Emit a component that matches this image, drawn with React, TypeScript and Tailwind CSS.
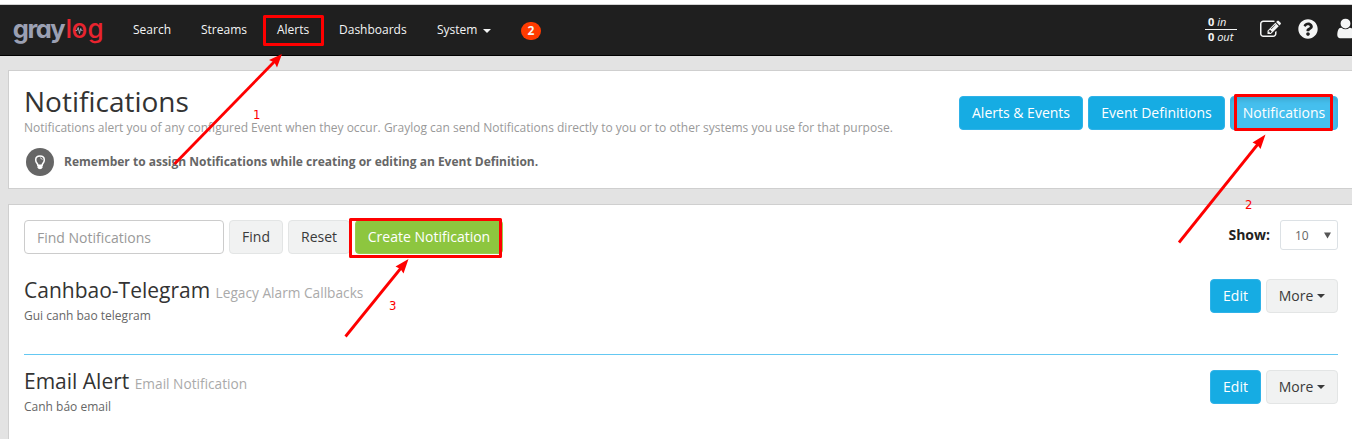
import type { ReactNode } from "react";
import { FaQuestionCircle } from "react-icons/fa";

function Caret({ className = "" }: { className?: string }) {
  return (
    <span
      className={`inline-block h-0 w-0 border-x-4 border-t-4 border-x-transparent border-t-current align-middle ${className}`}
    />
  );
}

function Logo() {
  return (
    <svg width="96" height="40" viewBox="0 0 96 40" className="block overflow-visible font-['Inter',sans-serif] [font-feature-settings:'cv11','ss01']">
      <text x="-1.3 13.5 21.7 36.300" y="28.500" fontWeight="700" fontSize="25.500" fill="#9ba0b3">
        gray
      </text>
      <text x="51.500 57.500 73.500" y="28.500" fontWeight="500" fontSize="26" fill="#e8242f">
        log
      </text>
      <polyline points="61.500,21.500 63,21.500 64.200,18.500 65.500,24.500 66.700,19.500 67.500,21.500 68.500,21.500" fill="none" stroke="#a9adbd" strokeWidth="0.9" />
    </svg>
  );
}

function EditIcon() {
  return (
    <svg className="ml-[23px] mt-[14px] shrink-0" width="21" height="21" viewBox="0 0 1792 1792" fill="currentColor">
      <path d="M888 1184l116-116-152-152-116 116v56h96v96h56zm440-720q-16-16-33 1l-350 350q-17 17-1 33t33-1l350-350q17-17 1-33zm80 594v190q0 119-84.500 203.500t-203.500 84.500h-832q-119 0-203.500-84.500t-84.500-203.500v-832q0-119 84.500-203.500t203.500-84.500h832q63 0 117 25 15 7 18 23 3 17-9 29l-49 49q-14 14-32 8-23-6-45-6h-832q-66 0-113 47t-47 113v832q0 66 47 113t113 47h832q66 0 113-47t47-113v-126q0-13 9-22l64-64q15-15 35-7t20 29zm-96-738l288 288-672 672h-288v-288zm444 132l-92 92-288-288 92-92q28-28 68-28t68 28l152 152q28 28 28 68t-28 68z" />
    </svg>
  );
}

function UserIcon() {
  return (
    <svg className="ml-[16px] mt-[12px] shrink-0" width="23" height="23" viewBox="0 0 1792 1792" fill="currentColor">
      <path d="M1536 1399q0 109-62.500 187t-150.500 78h-854q-88 0-150.500-78t-62.500-187q0-85 8.500-160.500t31.500-152 58.500-131 94-89 134.500-34.500q131 128 313 128t313-128q76 0 134.500 34.500t94 89 58.500 131 31.500 152 8.500 160.500zm-256-887q0 159-112.500 271.500t-271.500 112.500-271.500-112.500-112.500-271.500 112.500-271.500 271.500-112.500 271.500 112.500 112.500 271.500z" />
    </svg>
  );
}

function Button({ tone, className = "", children }: { tone: "blue" | "active" | "gray" | "green"; className?: string; children: ReactNode }) {
  const tones = {
    blue: "border-[#2fb2e8] bg-[#16ace3] text-white",
    active: "border-[#3ab4e6] bg-[#45bfee] text-white shadow-[inset_0_3px_5px_rgba(0,0,0,0.125)]",
    gray: "border-[#e3e5e5] bg-[#f1f2f2] text-[#3a3a3a]",
    green: "border-[#98cd4d] bg-[#8dc63f] text-white",
  };
  return (
    <button className={`flex h-[34px] shrink-0 items-center justify-center whitespace-nowrap rounded-[4px] border text-[14px] leading-5 ${tones[tone]} ${className}`}>
      {children}
    </button>
  );
}

function Entry({ title, type, description }: { title: string; type: string; description: string }) {
  return (
    <div className="flex items-start justify-between">
      <div>
        <h2 className="text-[21px] leading-[23px] text-[#333]">
          {title} <small className="text-[13.7px] text-[#aaa]">{type}</small>
        </h2>
        <p className="mt-[3px] text-[12px] leading-[17px] text-[#666]">{description}</p>
      </div>
      <div className="flex gap-[5px]">
        <Button tone="blue" className="w-[51px]">Edit</Button>
        <Button tone="gray" className="w-[72px]">
          More <Caret className="ml-1" />
        </Button>
      </div>
    </div>
  );
}

function Annotations() {
  return (
    <svg className="pointer-events-none absolute left-0 top-0" width="1352" height="439" viewBox="0 0 1352 439">
      <g fill="none" stroke="#fe0000" strokeWidth="3" strokeLinejoin="round">
        <rect x="264.5" y="16.5" width="58" height="28" />
        <rect x="1235.5" y="95.5" width="96" height="34" />
        <rect x="350.5" y="219.5" width="150" height="37" />
      </g>
      <g stroke="#fe0000" strokeWidth="2.8">
        <path d="M174.5 164 L275 61" />
        <path d="M1179 242.5 L1258 144" />
        <path d="M345.5 336.5 L401 268" />
      </g>
      <g fill="#fe0000">
        <path d="M282 54 L277 67.500 L274.500 62.500 L269 60 Z" />
        <path d="M1265.500 134.500 L1260.500 149 L1257.500 145 L1252.500 142.500 Z" />
        <path d="M408.500 259 L403.500 273.500 L400.500 269 L395.500 266.500 Z" />
      </g>
      <g fill="#fe0000" fontFamily="'DejaVu Sans Condensed', 'DejaVu Sans', sans-serif" fontStretch="condensed" fontSize="13">
        <text x="253" y="119">1</text>
        <text x="1245" y="209">2</text>
        <text x="389" y="310">3</text>
      </g>
    </svg>
  );
}

export default function App() {
  return (
    <div className="relative h-[439px] w-[1352px] overflow-hidden bg-[#e3e3e3] font-['Open_Sans',sans-serif] text-[12px] text-[#333]">
      <div className="h-[5px] border-b border-[#d3d3d3] bg-white" />
      <nav className="flex h-[51px] items-start border-b border-black bg-[#1f1f1f] text-[12px] leading-[18px] text-[#f4f5f5]">
        <div className="ml-[14px] mt-[4px] w-[119px]">
          <Logo />
        </div>
        <div className="mt-4 flex w-[388px]">
          <span className="w-[68px]">Search</span>
          <span className="w-[76px]">Streams</span>
          <span className="w-[62px]">Alerts</span>
          <span className="w-[98px]">Dashboards</span>
          <span>
            System
            <Caret className="ml-[6px]" />
          </span>
        </div>
        <span className="mt-[17px] flex h-[18px] w-5 items-center justify-center rounded-full bg-[#ff3b00] text-[12px] font-bold">2</span>
        <div className="ml-auto flex h-[50px] w-[147px] shrink-0">
          <div className="mt-[9px] w-[32px] shrink-0 text-[11px] leading-[15px]">
            <div className="h-[16px] border-b border-[#f4f5f5] pl-[3px]">
              <b>0</b> <i>in</i>
            </div>
            <div className="-mt-px whitespace-nowrap pl-[3px]">
              <b>0</b> <i>out</i>
            </div>
          </div>
          <EditIcon />
          <FaQuestionCircle className="ml-[17px] mt-[14px] shrink-0" size={20} />
          <UserIcon />
        </div>
      </nav>

      <section className="ml-2 mt-[14px] flex h-[119px] justify-between border border-r-0 border-[#cfcfcf] bg-white pl-[15px] pr-[14px]">
        <div>
          <h1 className="mt-[14px] text-[28px] leading-[32px]">Notifications</h1>
          <p className="mt-[2px] text-[12px] leading-[17px] text-[#999]">
            Notifications alert you of any configured Event when they occur. Graylog can send Notifications directly to you or to other systems you use for that purpose.
          </p>
          <div className="mt-[12px] flex items-start">
            <svg className="ml-[2px]" width="28" height="28" viewBox="0 0 28 28">
              <circle cx="14" cy="14" r="14" fill="#666" />
              <path d="M11.9 17.300 C11.9 15.500 9.700 14.800 9.700 11.900 C9.700 9.500 11.600 8 14 8 C16.400 8 18.300 9.500 18.300 11.900 C18.300 14.800 16.100 15.500 16.100 17.300 Z" fill="none" stroke="#fff" strokeWidth="1.500" />
              <path d="M14 9.900 C15.300 9.900 16.100 10.700 16.200 11.800" fill="none" stroke="#fff" strokeWidth="0.800" />
              <path d="M11.500 17 H16.500 V19.500 Q16 21 14 21.200 Q12 21 11.500 19.500 Z" fill="#fff" />
            </svg>
            <b className="ml-[10px] mt-[5px] text-[12px] leading-[17px] text-[#666]">
              Remember to assign Notifications while creating or editing an Event Definition.
            </b>
          </div>
        </div>
        <div className="mt-[25px] flex gap-[5px]">
          <Button tone="blue" className="w-[124px]">Alerts &amp; Events</Button>
          <Button tone="blue" className="w-[137px]">Event Definitions</Button>
          <Button tone="active" className="w-[108px]">Notifications</Button>
        </div>
      </section>

      <section className="ml-2 mt-[15px] h-[260px] border border-r-0 border-[#cfcfcf] bg-white pl-[15px] pr-[14px] pt-[15px]">
        <div className="flex items-start justify-between">
          <div className="flex gap-[5px]">
            <input
              placeholder="Find Notifications"
              className="h-[34px] w-[200px] rounded-[4px] border border-[#ccc] px-3 text-[14px] placeholder:text-[#999]"
            />
            <Button tone="gray" className="w-[54px]">Find</Button>
            <Button tone="gray" className="w-[62px]">Reset</Button>
            <Button tone="green" className="w-[148px]">Create Notification</Button>
          </div>
          <div className="flex items-start">
            <b className="mr-[10px] mt-[5px] text-[14px] leading-5 text-[#222]">Show:</b>
            <div className="flex h-[30px] w-[58px] items-center justify-between rounded-[3px] border border-[#dce1e5] pl-[14px] pr-[6px] text-[12px] text-[#666]">
              <span className="mt-px">10</span>
              <svg width="7" height="7" viewBox="0 0 7 7">
                <path d="M0 0.500 H7 L3.500 6.500 Z" fill="#555" />
              </svg>
            </div>
          </div>
        </div>
        <div className="mt-[25px] h-[76px] border-b border-[#64c8f2]">
          <Entry title="Canhbao-Telegram" type="Legacy Alarm Callbacks" description="Gui canh bao telegram" />
        </div>
        <div className="mt-[15px]">
          <Entry title="Email Alert" type="Email Notification" description="Canh báo email" />
        </div>
      </section>

      <Annotations />
    </div>
  );
}
